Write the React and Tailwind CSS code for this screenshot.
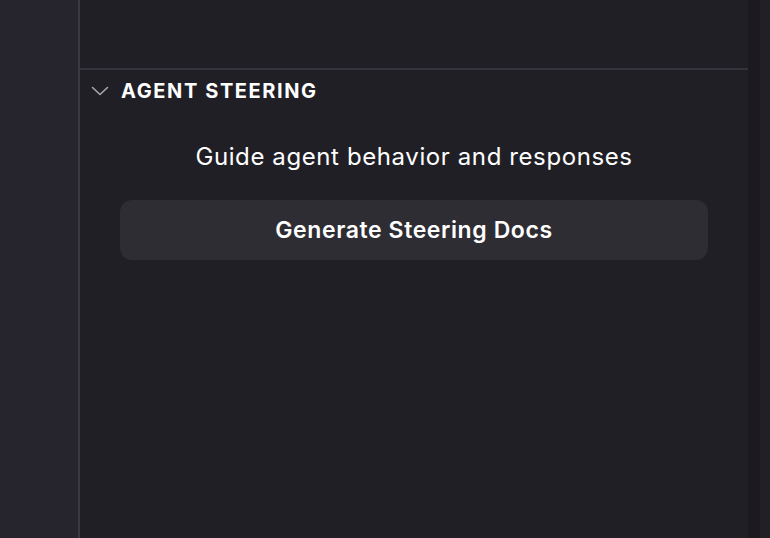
export default function App() {
  return (
    <div
      className="h-[538px] w-[770px] flex overflow-hidden bg-[#211f26] text-white"
      style={{ fontFamily: "Inter, 'Noto Sans', sans-serif" }}
    >
      {/* Left rail */}
      <div className="w-[80px] shrink-0 bg-[#26242d] border-r-2 border-[#3a3840]" />

      {/* Main panel */}
      <div className="flex-1 flex flex-col bg-[#211f26]">
        <div className="h-[70px] shrink-0 border-b-2 border-[#35333b]" />

        {/* Agent Steering section */}
        <div className="flex items-center h-[42px] pl-[11px]">
          <svg width="18" height="10" viewBox="0 0 18 10" fill="none" stroke="#a9a7ae" strokeWidth="1.6" strokeLinecap="round" strokeLinejoin="round">
            <path d="M1.5 1.5L9 8.5L16.5 1.5" />
          </svg>
          <span className="ml-[12px] text-[20px] leading-[24px] font-bold tracking-[1.6px]">AGENT STEERING</span>
        </div>

        <div className="flex flex-col items-center px-[40px]">
          <p className="mt-[30px] text-[24px] leading-[30px] tracking-[0.6px]">Guide agent behavior and responses</p>
          <button className="mt-[28px] w-full h-[60px] rounded-[12px] bg-[#2f2d34] text-[23px] font-semibold tracking-[0.6px]">
            Generate Steering Docs
          </button>
        </div>
      </div>

      {/* Scrollbar track */}
      <div className="w-[12px] shrink-0 bg-[#1b1a1f]" />
      <div className="w-[10px] shrink-0 bg-[#221f26]" />
    </div>
  );
}
